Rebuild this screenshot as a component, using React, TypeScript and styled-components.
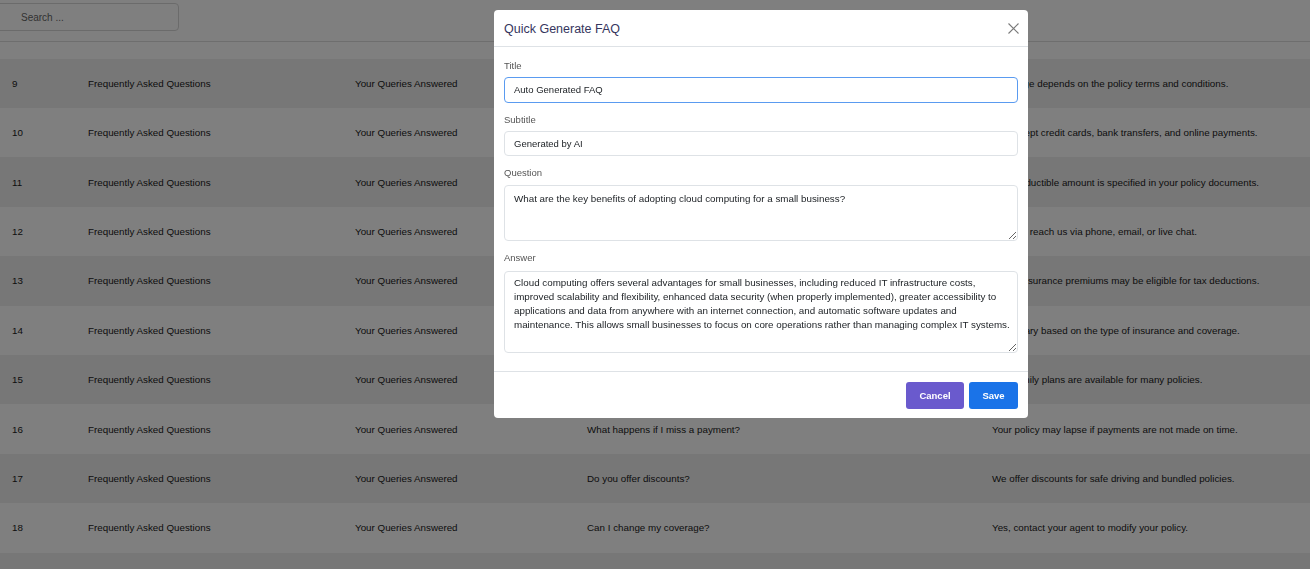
import React from 'react';
import styled, { createGlobalStyle } from 'styled-components';

const GlobalStyle = createGlobalStyle`
  html, body {
    margin: 0;
    padding: 0;
    background: #fff;
    font-family: "Liberation Sans", Arial, sans-serif;
    overflow: hidden;
  }
  * { box-sizing: border-box; }
`;

const Page = styled.div`
  width: 1310px;
  height: 569px;
  overflow: hidden;
  background: #fff;
`;

const TopBar = styled.div`
  height: 42px;
  border-bottom: 1px solid #dcdcdc;
  padding: 3px 0 0 0;
`;

const Search = styled.input`
  margin-left: -12px;
  width: 191px;
  height: 28px;
  border: 1px solid #d6d6d6;
  border-radius: 4px;
  padding: 0 0 0 32px;
  font-family: inherit;
  font-size: 10px;
  color: #333;
  outline: none;
  &::placeholder { color: #666; }
`;

const Table = styled.div`
  display: flex;
  flex-direction: column;
`;

const Row = styled.div<{ $striped?: boolean; $h?: number }>`
  display: grid;
  grid-template-columns: 88px 267px 232px 405px 1fr;
  align-items: center;
  height: ${(p) => (p.$h ? `${p.$h}px` : '49.4px')};
  flex-shrink: 0;
  background: ${(p) => (p.$striped ? '#eeeeee' : '#fff')};
  font-size: 9.8px;
  color: #1a1a1a;
`;

const Cell = styled.div`
  white-space: nowrap;
  &:first-child { padding-left: 12px; }
`;

const Overlay = styled.div`
  position: fixed;
  inset: 0;
  background: rgba(0, 0, 0, 0.5);
  display: flex;
  justify-content: center;
  align-items: flex-start;
  padding: 10px 0 0 212px;
`;

const Modal = styled.div`
  width: 534px;
  background: #fff;
  border-radius: 4px;
  display: flex;
  flex-direction: column;
`;

const Header = styled.div`
  height: 37px;
  display: flex;
  align-items: center;
  justify-content: space-between;
  padding: 1px 10px 0;
  border-bottom: 1px solid #dee2e6;
`;

const ModalTitle = styled.div`
  font-size: 12.5px;
  color: #36365e;
`;

const Close = styled.button`
  border: none;
  background: none;
  padding: 0;
  width: 11px;
  height: 11px;
  margin-right: -1px;
  display: flex;
  cursor: pointer;
`;

const Body = styled.div`
  padding: 13px 10px 18px;
  display: flex;
  flex-direction: column;
`;

const Label = styled.label`
  display: block;
  font-size: 9.5px;
  line-height: 11px;
  color: #555;
  margin-bottom: 6px;
`;

const Field = styled.input<{ $focus?: boolean }>`
  width: 100%;
  height: 25.5px;
  border: 1px solid ${(p) => (p.$focus ? '#5a9bf0' : '#dee2e6')};
  border-radius: 4px;
  padding: 0 9px;
  font-family: inherit;
  font-size: 9.5px;
  color: #212529;
  margin-bottom: 11px;
  outline: none;
`;

const Area = styled.textarea<{ $h: number; $last?: boolean }>`
  width: 100%;
  height: ${(p) => p.$h}px;
  border: 1px solid #dee2e6;
  border-radius: 4px;
  padding: ${(p) => (p.$last ? '4px' : '6px')} 6px 6px 9px;
  margin-top: ${(p) => (p.$last ? '1.5px' : '1px')};
  font-family: inherit;
  font-size: 9.8px;
  line-height: 14.3px;
  color: #212529;
  margin-bottom: ${(p) => (p.$last ? '0' : '11px')};
  outline: none;
  resize: vertical;
  display: block;
`;

const Footer = styled.div`
  border-top: 1px solid #dee2e6;
  padding: 10px 10px 9px;
  display: flex;
  justify-content: flex-end;
  gap: 5px;
`;

const Btn = styled.button<{ $color: string; $w: number }>`
  width: ${(p) => p.$w}px;
  height: 27px;
  border: none;
  border-radius: 3px;
  background: ${(p) => p.$color};
  color: #fff;
  font-family: inherit;
  font-weight: bold;
  font-size: 9.5px;
`;

const rows = [
  [9, 'Who is covered?', 'Coverage depends on the policy terms and conditions.'],
  [10, 'What payment methods do you accept?', 'We accept credit cards, bank transfers, and online payments.'],
  [11, 'What is my deductible?', 'Your deductible amount is specified in your policy documents.'],
  [12, 'How do I contact support?', 'You can reach us via phone, email, or live chat.'],
  [13, 'Is my premium tax deductible?', 'Some insurance premiums may be eligible for tax deductions.'],
  [14, 'How much does insurance cost?', 'Costs vary based on the type of insurance and coverage.'],
  [15, 'Do you offer family plans?', 'Yes, family plans are available for many policies.'],
  [16, 'What happens if I miss a payment?', 'Your policy may lapse if payments are not made on time.'],
  [17, 'Do you offer discounts?', 'We offer discounts for safe driving and bundled policies.'],
  [18, 'Can I change my coverage?', 'Yes, contact your agent to modify your policy.'],
] as const;

const answer =
  'Cloud computing offers several advantages for small businesses, including reduced IT infrastructure costs,\n' +
  'improved scalability and flexibility, enhanced data security (when properly implemented), greater accessibility to\n' +
  'applications and data from anywhere with an internet connection, and automatic software updates and\n' +
  'maintenance. This allows small businesses to focus on core operations rather than managing complex IT systems.';

export default function App() {
  return (
    <Page>
      <GlobalStyle />
      <TopBar>
        <Search placeholder="Search ..." />
      </TopBar>
      <Table>
        <Row $h={16.6} />
        {rows.map(([n, q, a]) => (
          <Row key={n} $striped={n % 2 === 1}>
            <Cell>{n}</Cell>
            <Cell>Frequently Asked Questions</Cell>
            <Cell>Your Queries Answered</Cell>
            <Cell>{q}</Cell>
            <Cell>{a}</Cell>
          </Row>
        ))}
        <Row $striped />
      </Table>
      <Overlay>
        <Modal>
          <Header>
            <ModalTitle>Quick Generate FAQ</ModalTitle>
            <Close aria-label="Close">
              <svg width="11" height="11" viewBox="0 0 11 11">
                <path d="M0.5 0.5L10.5 10.5M10.5 0.5L0.5 10.5" stroke="#7a7a7a" strokeWidth="1.1" />
              </svg>
            </Close>
          </Header>
          <Body>
            <Label>Title</Label>
            <Field $focus defaultValue="Auto Generated FAQ" />
            <Label>Subtitle</Label>
            <Field defaultValue="Generated by AI" />
            <Label>Question</Label>
            <Area $h={56} defaultValue="What are the key benefits of adopting cloud computing for a small business?" />
            <Label>Answer</Label>
            <Area $h={82} $last defaultValue={answer} />
          </Body>
          <Footer>
            <Btn $color="#6a5acd" $w={58}>Cancel</Btn>
            <Btn $color="#1a73e8" $w={49}>Save</Btn>
          </Footer>
        </Modal>
      </Overlay>
    </Page>
  );
}
